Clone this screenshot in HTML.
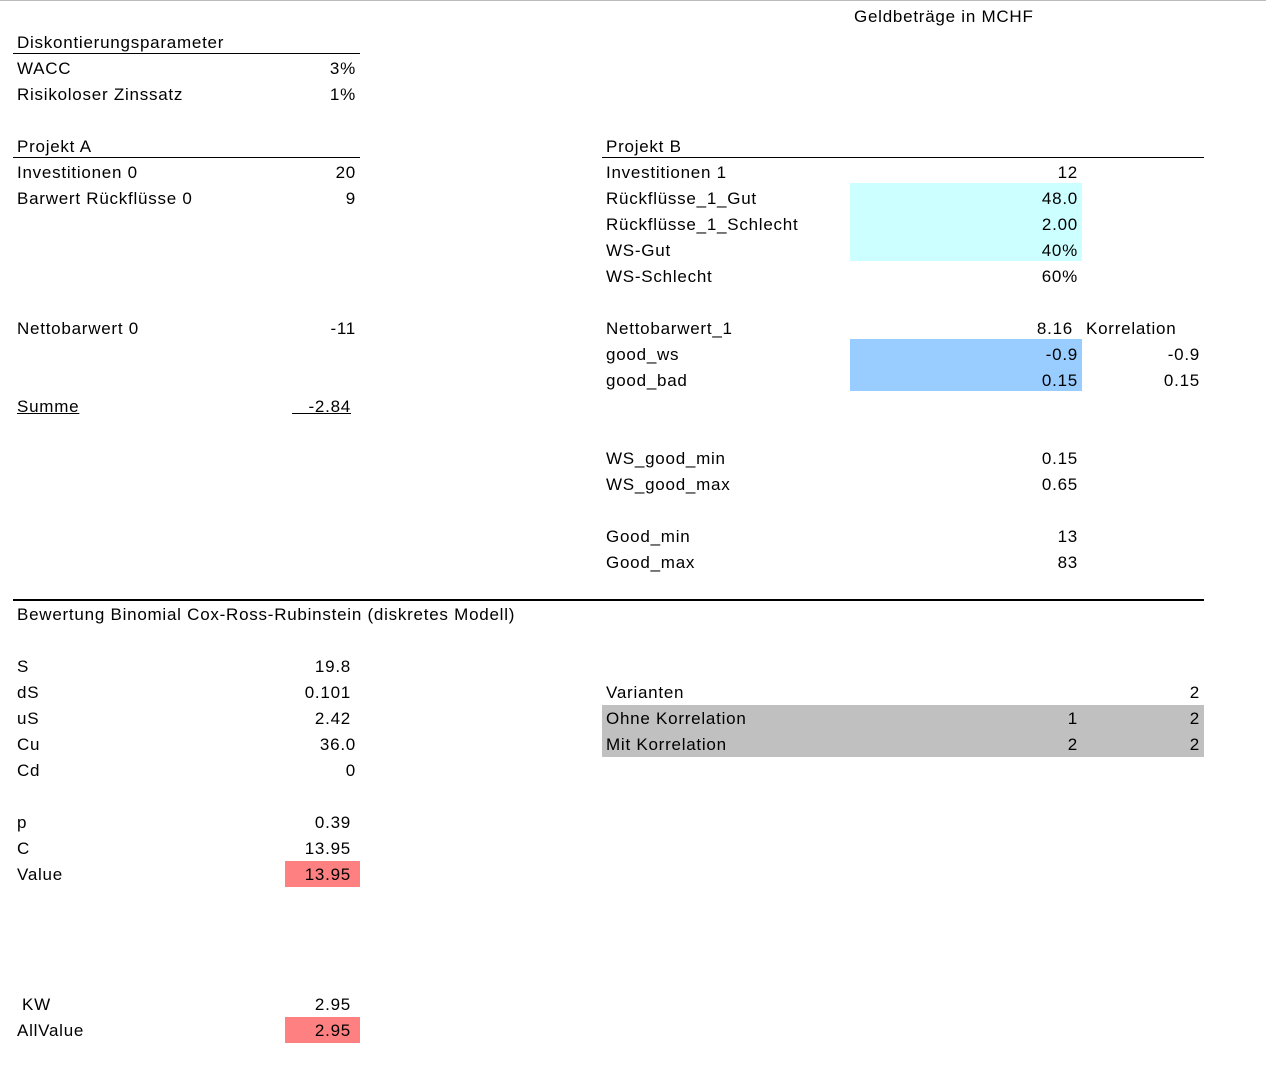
<!DOCTYPE html>
<html><head><meta charset="utf-8"><style>
html,body{margin:0;padding:0;background:#fff;}
body{width:1266px;height:1069px;position:relative;overflow:hidden;font-family:"Liberation Sans",sans-serif;font-size:17px;color:#000;letter-spacing:0.75px;}
.t{position:absolute;line-height:26px;height:26px;white-space:nowrap;margin-top:1px;}
.r{text-align:right;}
.bg{position:absolute;}
.ln{position:absolute;background:#000;}
</style></head><body>
<div class="ln" style="left:0;top:0;width:1266px;height:1px;background:#bbb"></div>

<div class="bg" style="left:850px;top:183px;width:232px;height:78px;background:#CCFFFF"></div>
<div class="bg" style="left:850px;top:339px;width:232px;height:52px;background:#99CCFF"></div>
<div class="bg" style="left:602px;top:705px;width:602px;height:52px;background:#C0C0C0"></div>
<div class="bg" style="left:285px;top:861px;width:75px;height:26px;background:#FF8080"></div>
<div class="bg" style="left:285px;top:1017px;width:75px;height:26px;background:#FF8080"></div>

<div class="ln" style="left:13px;top:53px;width:347px;height:1px"></div>
<div class="ln" style="left:13px;top:157px;width:347px;height:1px"></div>
<div class="ln" style="left:602px;top:157px;width:602px;height:1px"></div>
<div class="ln" style="left:13px;top:599px;width:1191px;height:2px"></div>

<div class="t" style="left:854px;top:3px">Geldbeträge in MCHF</div>

<div class="t" style="left:17px;top:29px">Diskontierungsparameter</div>
<div class="t" style="left:17px;top:55px">WACC</div><div class="t r" style="right:910px;top:55px">3%</div>
<div class="t" style="left:17px;top:81px">Risikoloser Zinssatz</div><div class="t r" style="right:910px;top:81px">1%</div>

<div class="t" style="left:17px;top:133px">Projekt A</div>
<div class="t" style="left:606px;top:133px">Projekt B</div>
<div class="t" style="left:17px;top:159px">Investitionen 0</div><div class="t r" style="right:910px;top:159px">20</div>
<div class="t" style="left:606px;top:159px">Investitionen 1</div><div class="t r" style="right:188px;top:159px">12</div>
<div class="t" style="left:17px;top:185px">Barwert Rückflüsse 0</div><div class="t r" style="right:910px;top:185px">9</div>
<div class="t" style="left:606px;top:185px">Rückflüsse_1_Gut</div><div class="t r" style="right:188px;top:185px">48.0</div>
<div class="t" style="left:606px;top:211px">Rückflüsse_1_Schlecht</div><div class="t r" style="right:188px;top:211px">2.00</div>
<div class="t" style="left:606px;top:237px">WS-Gut</div><div class="t r" style="right:188px;top:237px">40%</div>
<div class="t" style="left:606px;top:263px">WS-Schlecht</div><div class="t r" style="right:188px;top:263px">60%</div>

<div class="t" style="left:17px;top:315px">Nettobarwert 0</div><div class="t r" style="right:910px;top:315px">-11</div>
<div class="t" style="left:606px;top:315px">Nettobarwert_1</div><div class="t r" style="right:193px;top:315px">8.16</div>
<div class="t" style="left:1086px;top:315px">Korrelation</div>
<div class="t" style="left:606px;top:341px">good_ws</div><div class="t r" style="right:188px;top:341px">-0.9</div><div class="t r" style="right:66px;top:341px">-0.9</div>
<div class="t" style="left:606px;top:367px">good_bad</div><div class="t r" style="right:188px;top:367px">0.15</div><div class="t r" style="right:66px;top:367px">0.15</div>
<div class="t" style="left:17px;top:393px;text-decoration:underline">Summe</div>
<div class="t r" style="right:915px;top:393px;text-decoration:underline">&nbsp;&nbsp;&nbsp;-2.84</div>

<div class="t" style="left:606px;top:445px">WS_good_min</div><div class="t r" style="right:188px;top:445px">0.15</div>
<div class="t" style="left:606px;top:471px">WS_good_max</div><div class="t r" style="right:188px;top:471px">0.65</div>
<div class="t" style="left:606px;top:523px">Good_min</div><div class="t r" style="right:188px;top:523px">13</div>
<div class="t" style="left:606px;top:549px">Good_max</div><div class="t r" style="right:188px;top:549px">83</div>

<div class="t" style="left:17px;top:601px">Bewertung Binomial Cox-Ross-Rubinstein (diskretes Modell)</div>
<div class="t" style="left:17px;top:653px">S</div><div class="t r" style="right:915px;top:653px">19.8</div>
<div class="t" style="left:17px;top:679px">dS</div><div class="t r" style="right:915px;top:679px">0.101</div>
<div class="t" style="left:606px;top:679px">Varianten</div><div class="t r" style="right:66px;top:679px">2</div>
<div class="t" style="left:17px;top:705px">uS</div><div class="t r" style="right:915px;top:705px">2.42</div>
<div class="t" style="left:606px;top:705px">Ohne Korrelation</div><div class="t r" style="right:188px;top:705px">1</div><div class="t r" style="right:66px;top:705px">2</div>
<div class="t" style="left:17px;top:731px">Cu</div><div class="t r" style="right:910px;top:731px">36.0</div>
<div class="t" style="left:606px;top:731px">Mit Korrelation</div><div class="t r" style="right:188px;top:731px">2</div><div class="t r" style="right:66px;top:731px">2</div>
<div class="t" style="left:17px;top:757px">Cd</div><div class="t r" style="right:910px;top:757px">0</div>
<div class="t" style="left:17px;top:809px">p</div><div class="t r" style="right:915px;top:809px">0.39</div>
<div class="t" style="left:17px;top:835px">C</div><div class="t r" style="right:915px;top:835px">13.95</div>
<div class="t" style="left:17px;top:861px">Value</div><div class="t r" style="right:915px;top:861px">13.95</div>
<div class="t" style="left:22px;top:991px">KW</div><div class="t r" style="right:915px;top:991px">2.95</div>
<div class="t" style="left:17px;top:1017px">AllValue</div><div class="t r" style="right:915px;top:1017px">2.95</div>
</body></html>
